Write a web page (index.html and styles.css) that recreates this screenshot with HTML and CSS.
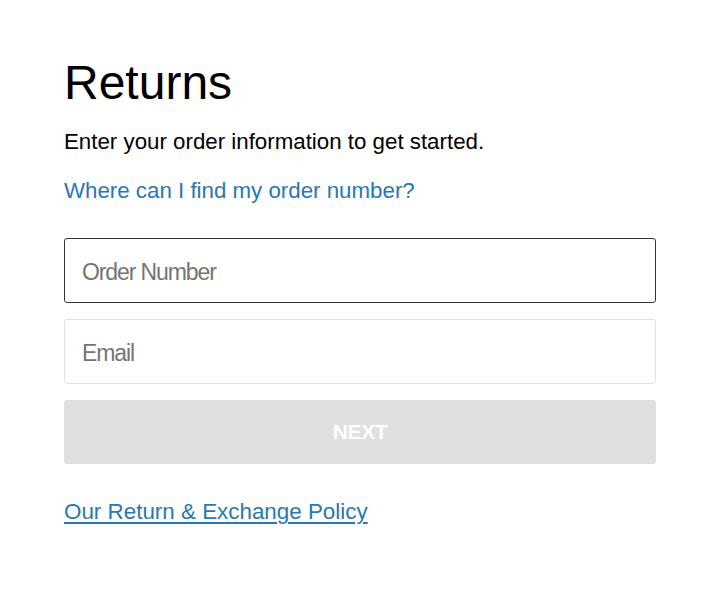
FILE: index.html
```html
<!DOCTYPE html>
<html lang="en">
<head>
<meta charset="utf-8">
<title>Returns</title>
<link rel="stylesheet" href="styles.css">
</head>
<body>
<main class="page">
  <h1 class="title">Returns</h1>
  <p class="intro">Enter your order information to get started.</p>
  <a class="help-link" href="#">Where can I find my order number?</a>
  <form class="form">
    <input class="field field-active" type="text" placeholder="Order Number">
    <input class="field" type="email" placeholder="Email">
    <button class="btn" type="button">NEXT</button>
  </form>
  <a class="policy-link" href="#">Our Return &amp; Exchange Policy</a>
</main>
</body>
</html>
```
FILE: styles.css
```css
html, body {
  margin: 0;
  padding: 0;
  background: #ffffff;
}
body {
  font-family: "Liberation Sans", Arial, Helvetica, sans-serif;
  color: #000;
}
.page {
  width: 592px;
  padding: 55px 0 0 64px;
  display: flex;
  flex-direction: column;
  align-items: flex-start;
}
.title {
  margin: 0;
  font-size: 48px;
  font-weight: 400;
  line-height: 55px;
}
.intro {
  margin: 19px 0 0;
  font-size: 22.3px;
  line-height: 25px;
}
.help-link {
  margin-top: 24px;
  font-size: 22.3px;
  line-height: 25px;
  color: #2a77b6;
  text-decoration: none;
}
.form {
  margin-top: 35px;
  width: 592px;
  display: flex;
  flex-direction: column;
  gap: 16px;
}
.field {
  box-sizing: border-box;
  width: 100%;
  height: 65px;
  margin: 0;
  padding: 3px 17px 0;
  border: 1px solid #e2e2e2;
  border-radius: 3px;
  background: #fff;
  font-family: "Liberation Sans", Arial, sans-serif;
  font-size: 23px;
  letter-spacing: -1.1px;
  color: #333;
  outline: none;
}
.field-active {
  border-color: #333;
}
.field::placeholder {
  color: #757575;
  opacity: 1;
}
.btn {
  box-sizing: border-box;
  width: 100%;
  height: 64px;
  margin: 0;
  border: none;
  border-radius: 3px;
  background: #e0e0e0;
  color: #fff;
  font-family: "Liberation Sans", Arial, sans-serif;
  font-size: 21px;
  font-weight: 700;
  letter-spacing: -0.4px;
}
.policy-link {
  margin-top: 35px;
  font-size: 22.4px;
  line-height: 25px;
  color: #2a77b6;
  text-decoration: underline;
  text-underline-offset: 3px;
  text-decoration-thickness: 2px;
}
```
